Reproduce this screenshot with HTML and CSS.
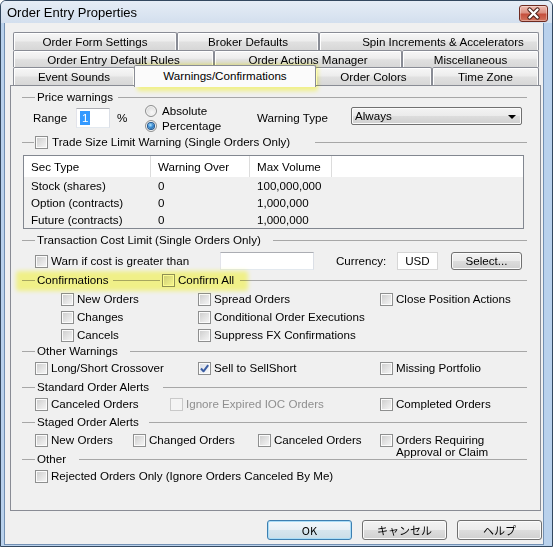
FILE: index.html
```html
<!DOCTYPE html>
<html lang="en">
<head>
<meta charset="utf-8">
<title>Order Entry Properties</title>
<link rel="stylesheet" href="styles.css">
</head>
<body>
<div class="window">
  <div class="titlebar">
    <span class="title">Order Entry Properties</span>
    <div class="close">
      <svg width="27" height="15" viewBox="0 0 27 15">
        <path d="M9.5 3.5 L17.5 11.5 M17.5 3.5 L9.5 11.5" stroke="#4a1e16" stroke-width="4.4" stroke-linecap="round" fill="none"/>
        <path d="M9.5 3.5 L17.5 11.5 M17.5 3.5 L9.5 11.5" stroke="#ffffff" stroke-width="2.4" stroke-linecap="round" fill="none"/>
      </svg>
    </div>
  </div>
  <div class="frame">
    <div class="client">
      <div class="tabs">
        <div class="tabrow r1">
          <div class="tab">Order Form Settings</div>
          <div class="tab">Broker Defaults</div>
          <div class="tab tab-spin">Spin Increments &amp; Accelerators</div>
        </div>
        <div class="tabrow r2">
          <div class="tab">Order Entry Default Rules</div>
          <div class="tab">Order Actions Manager</div>
          <div class="tab">Miscellaneous</div>
        </div>
        <div class="tabrow r3">
          <div class="tab">Event Sounds</div>
          <div class="tab sel">Warnings/Confirmations</div>
          <div class="tab">Order Colors</div>
          <div class="tab">Time Zone</div>
        </div>
      </div>

      <div class="panel">
        <div class="gh">
          <span class="lead"></span><span class="cap cap-price">Price warnings</span><span class="ln"></span>
        </div>
        <div class="price">
          <span class="p-range">Range</span>
          <span class="textbox tb-range"><span class="selected">1</span></span>
          <span class="p-pct">%</span>
          <div class="radios">
            <div class="rad"><span class="radio"></span><span>Absolute</span></div>
            <div class="rad"><span class="radio on"></span><span>Percentage</span></div>
          </div>
          <span class="p-wt">Warning Type</span>
          <div class="combo"><span class="combo-text">Always</span><span class="arrow"></span></div>
        </div>

        <div class="gh gh-trade">
          <span class="lead lead-cb"></span><span class="cb"></span><span class="cap cap-trade">Trade Size Limit Warning (Single Orders Only)</span><span class="ln"></span>
        </div>

        <div class="listview">
          <div class="lv-head">
            <span class="lv-h">Sec Type</span>
            <span class="lv-h">Warning Over</span>
            <span class="lv-h">Max Volume</span>
            <span class="lv-h lv-last"></span>
          </div>
          <div class="lv-row"><span>Stock (shares)</span><span>0</span><span>100,000,000</span><span></span></div>
          <div class="lv-row"><span>Option (contracts)</span><span>0</span><span>1,000,000</span><span></span></div>
          <div class="lv-row"><span>Future (contracts)</span><span>0</span><span>1,000,000</span><span></span></div>
        </div>

        <div class="gh gh-tx">
          <span class="lead"></span><span class="cap cap-tx">Transaction Cost Limit (Single Orders Only)</span><span class="ln"></span>
        </div>
        <div class="row row-warn">
          <label class="chk c-warn"><span class="cb"></span><span>Warn if cost is greater than</span></label>
          <span class="textbox tb-cost"></span>
          <span class="cur-label">Currency:</span>
          <span class="textbox tb-usd">USD</span>
          <span class="btn btn-select">Select...</span>
        </div>

        <div class="gh gh-conf">
          <span class="lead"></span><span class="cap cap-conf">Confirmations</span><span class="ln ln-seg"></span><span class="cb"></span><span class="cap cap-all">Confirm All</span><span class="ln"></span>
        </div>
        <div class="conf-grid">
          <label class="chk"><span class="cb"></span><span>New Orders</span></label>
          <label class="chk"><span class="cb"></span><span>Spread Orders</span></label>
          <label class="chk"><span class="cb"></span><span>Close Position Actions</span></label>
          <label class="chk"><span class="cb"></span><span>Changes</span></label>
          <label class="chk"><span class="cb"></span><span>Conditional Order Executions</span></label>
          <span></span>
          <label class="chk"><span class="cb"></span><span>Cancels</span></label>
          <label class="chk"><span class="cb"></span><span>Suppress FX Confirmations</span></label>
          <span></span>
        </div>

        <div class="gh gh-ow">
          <span class="lead"></span><span class="cap cap-ow">Other Warnings</span><span class="ln"></span>
        </div>
        <div class="row row-ow">
          <label class="chk w163"><span class="cb"></span><span>Long/Short Crossover</span></label>
          <label class="chk w182"><span class="cb checked"><svg width="11" height="11" viewBox="0 0 11 11"><path d="M2 5.5 L4.5 8.3 L9.2 2.2" stroke="#3a5da3" stroke-width="2" fill="none" stroke-linejoin="round"/></svg></span><span>Sell to SellShort</span></label>
          <label class="chk"><span class="cb"></span><span>Missing Portfolio</span></label>
        </div>

        <div class="gh gh-soa">
          <span class="lead"></span><span class="cap cap-soa">Standard Order Alerts</span><span class="ln"></span>
        </div>
        <div class="row row-soa">
          <label class="chk w135"><span class="cb"></span><span>Canceled Orders</span></label>
          <label class="chk w210 disabled"><span class="cb"></span><span>Ignore Expired IOC Orders</span></label>
          <label class="chk"><span class="cb"></span><span>Completed Orders</span></label>
        </div>

        <div class="gh gh-staged">
          <span class="lead"></span><span class="cap cap-staged">Staged Order Alerts</span><span class="ln"></span>
        </div>
        <div class="row row-staged">
          <label class="chk w98"><span class="cb"></span><span>New Orders</span></label>
          <label class="chk w125"><span class="cb"></span><span>Changed Orders</span></label>
          <label class="chk w122"><span class="cb"></span><span>Canceled Orders</span></label>
          <label class="chk two"><span class="cb"></span><span class="two-text">Orders Requiring<br>Approval or Claim</span></label>
        </div>

        <div class="gh gh-other">
          <span class="lead"></span><span class="cap cap-other">Other</span><span class="ln"></span>
        </div>
        <div class="row row-other">
          <label class="chk"><span class="cb"></span><span>Rejected Orders Only (Ignore Orders Canceled By Me)</span></label>
        </div>
      </div>

      <div class="buttons">
        <span class="btn btn-ok">OK</span>
        <span class="btn">キャンセル</span>
        <span class="btn">ヘルプ</span>
      </div>
    </div>
  </div>
  <div class="hl hl-tab"></div>
  <div class="hl hl-conf"></div>
</div>
</body>
</html>
```

FILE: styles.css
```css
* { box-sizing: border-box; }
html, body { margin: 0; padding: 0; }
body {
  font-family: "Liberation Sans", Arial, "Noto Sans CJK JP", sans-serif;
  font-size: 11.6px;
  line-height: 14px;
  color: #000;
  background: #fff;
}

.window {
  position: relative;
  width: 553px;
  height: 547px;
  border: 1px solid #34485f;
  border-radius: 6px 6px 0 0;
  background: #b9d1ec;
  display: flex;
  flex-direction: column;
  overflow: hidden;
}

.titlebar {
  height: 22px;
  flex: none;
  display: flex;
  align-items: center;
  padding-left: 6px;
  background: linear-gradient(#e6edf6, #d3dfee);
}
.title {
  flex: 1;
  font-size: 13px;
  line-height: 16px;
  padding-top: 1px;
}
.close {
  width: 29px;
  height: 17px;
  margin: 2px 4px 0 0;
  border: 1px solid #6e2a20;
  border-radius: 3px;
  background: linear-gradient(#eebbb0 0%, #dc9183 45%, #c54f3d 55%, #d2735d 100%);
  box-shadow: inset 0 0 0 1px rgba(255,255,255,0.35);
  display: flex;
  align-items: center;
  justify-content: center;
}
.close svg { display: block; }

.frame {
  flex: 1;
  display: flex;
  padding: 0 8px 1px 3px;
}
.client {
  flex: 1;
  display: flex;
  flex-direction: column;
  background: #f0f0f0;
  border: 1px solid #7390b3;
  border-top: none;
  padding-top: 9px;
}

/* Tabs */
.tabs { margin-left: 8px; width: 526px; }
.tabrow { display: grid; }
.r1 { grid-template-columns: 164px 142px 220px; height: 18px; }
.r2 { grid-template-columns: 201px 188px 137px; height: 17px; }
.r3 { grid-template-columns: 122px 180px 117px 107px; height: 18px; }
.tab {
  border: 1px solid #898c95;
  border-bottom: none;
  border-radius: 2px 2px 0 0;
  background: linear-gradient(#f7f7f7, #ededed 45%, #e0e0e0 55%, #d7d7d7);
  box-shadow: inset 1px 1px 0 #ffffff, inset -1px 0 0 #fbfbfb;
  text-align: center;
  line-height: 14px;
  padding-top: 2px;
  white-space: nowrap;
}
.tab-spin { padding-left: 28px; }
.tab.sel {
  position: relative;
  z-index: 2;
  margin: -2px -1px -2px -1px;
  background: #fbfbfb;
  box-shadow: none;
  padding-top: 3px;
}

/* Panel */
.panel {
  margin-left: 5px;
  width: 531px;
  height: 426px;
  border: 1px solid #898c95;
  background: #f0f0f0;
  padding: 4px 13px 0 11px;
}

.gh {
  display: flex;
  align-items: center;
  height: 14px;
}
.ln {
  flex: 1;
  height: 0;
  border-top: 1px solid #a7a7a7;
}
.lead {
  flex: 0 0 13px;
  height: 0;
  border-top: 1px solid #a7a7a7;
  margin-right: 2px;
}
.lead-cb { flex-basis: 12px; margin-right: 1px; }
.cap { flex: none; white-space: nowrap; }
.cap-price { width: 81px; }
.cap-trade { width: 267px; padding-left: 4px; }
.cap-tx { width: 236px; }
.cap-conf { width: 76px; }
.ln-seg { flex: 0 0 47px; margin-right: 2px; }
.cap-all { width: 65px; padding-left: 3px; }
.cap-ow { width: 93px; }
.cap-soa { width: 126px; }
.cap-staged { width: 112px; }
.cap-other { width: 42px; }

.gh-trade { margin-top: 3px; }
.gh-tx { margin-top: 4px; }
.gh-conf { margin-top: 1px; }
.gh-soa { margin-top: 3px; }
.gh-staged { margin-top: 2px; }
.gh-other { margin-top: 3px; }

/* Checkbox */
.cb {
  flex: none;
  display: inline-flex;
  align-items: center;
  justify-content: center;
  width: 13px;
  height: 13px;
  border: 1px solid #8e8f8f;
  background: linear-gradient(135deg, #cbcbcb 0%, #e4e4e4 55%, #f7f7f7 100%);
  box-shadow: inset 0 0 0 1px #fbfbfb;
}
.cb.checked {
  background: linear-gradient(135deg, #d6dbe4 0%, #eef0f4 60%, #fafafa 100%);
}
.cb svg { display: block; }
.chk {
  display: flex;
  align-items: center;
  gap: 3px;
  white-space: nowrap;
  flex: none;
}
.disabled { color: #8f8f8f; }
.disabled .cb {
  border-color: #c9c9c9;
  background: #f4f4f4;
  box-shadow: none;
}

/* Price row */
.price {
  display: flex;
  align-items: center;
  height: 28px;
  padding-left: 11px;
}
.p-range { width: 43px; }
.textbox {
  display: inline-flex;
  align-items: center;
  background: #fff;
  border: 1px solid;
  border-color: #abadb3 #dbdfe6 #e3e9ef #e2e3ea;
}
.tb-range {
  width: 34px;
  height: 20px;
  padding-left: 3px;
}
.selected {
  background: #3399ff;
  color: #fff;
  padding: 0 2px;
  line-height: 14px;
}
.p-pct { width: 28px; margin-left: 7px; }
.radios {
  width: 112px;
  display: flex;
  flex-direction: column;
}
.rad {
  height: 15px;
  display: flex;
  align-items: center;
  gap: 5px;
}
.radio {
  width: 12px;
  height: 12px;
  border-radius: 50%;
  border: 1px solid #8e8f8f;
  background: radial-gradient(circle at 60% 65%, #f8f8f8 0%, #e2e2e2 55%, #cdcdcd 100%);
  box-shadow: inset 0 0 0 1px #f6f6f6;
  display: flex;
  align-items: center;
  justify-content: center;
}
.radio.on::after {
  content: "";
  width: 6px;
  height: 6px;
  border-radius: 50%;
  background: radial-gradient(circle at 40% 35%, #b3e6ff 0%, #3c8fd6 45%, #124e8a 100%);
  box-shadow: 0 0 0 1px #1f5790;
}
.p-wt { width: 94px; }
.combo {
  align-self: flex-start;
  margin-top: 3px;
  width: 171px;
  height: 18px;
  border: 1px solid #707070;
  border-radius: 2px;
  background: linear-gradient(#f3f3f3 0%, #ebebeb 50%, #dddddd 50%, #d0d0d0 100%);
  box-shadow: inset 0 0 0 1px #fbfbfb;
  display: flex;
  align-items: center;
  padding: 0 3px 0 3px;
}
.combo-text { flex: 1; }
.arrow {
  width: 0;
  height: 0;
  border-left: 4px solid transparent;
  border-right: 4px solid transparent;
  border-top: 4px solid #000;
  margin-right: 2px;
  margin-top: 1px;
}

/* List view */
.listview {
  margin: 6px 0 0 1px;
  width: 501px;
  border: 1px solid #828790;
  background: #f0f0f0;
}
.lv-head, .lv-row {
  display: grid;
  grid-template-columns: 127px 99px 82px 1fr;
}
.lv-head {
  height: 21px;
  background: #fff;
  align-items: center;
}
.lv-h {
  height: 21px;
  display: flex;
  align-items: center;
  padding-left: 7px;
  border-right: 1px solid #dcdcdc;
}
.lv-h.lv-last { border-right: none; }
.lv-row {
  height: 17px;
  align-items: center;
}
.lv-row span { padding-left: 7px; white-space: nowrap; }

/* Rows */
.row {
  display: flex;
  align-items: center;
  height: 18px;
  padding-left: 13px;
}
.row-warn { height: 22px; margin-top: 3px; }
.c-warn { width: 185px; }
.tb-cost { width: 94px; height: 18px; }
.cur-label { width: 61px; margin-left: 22px; }
.tb-usd {
  width: 41px;
  height: 18px;
  justify-content: center;
  border-color: #d6d6d6;
}
.btn {
  display: inline-flex;
  align-items: center;
  justify-content: center;
  border: 1px solid #707070;
  border-radius: 3px;
  background: linear-gradient(#f3f3f3 0%, #ebebeb 50%, #dddddd 50%, #d0d0d0 100%);
  box-shadow: inset 0 0 0 1px #fbfbfb;
  white-space: nowrap;
}
.btn-select {
  width: 71px;
  height: 18px;
  margin-left: 13px;
}

.conf-grid {
  margin-top: 3px;
  padding-left: 39px;
  display: grid;
  grid-template-columns: 137px 182px 1fr;
  grid-auto-rows: 18px;
  align-items: center;
}

.row-ow { margin-top: 1px; }
.row-soa { margin-top: 1px; }
.row-staged { margin-top: 2px; align-items: flex-start; }
.row-staged .chk { height: 18px; }
.row-other { margin-top: 1px; }
.w163 { width: 163px; }
.w182 { width: 182px; }
.w135 { width: 135px; }
.w210 { width: 210px; }
.w98 { width: 98px; }
.w125 { width: 125px; }
.w122 { width: 122px; }
.chk.two { align-items: flex-start; }
.chk.two .cb { margin-top: 3px; }
.two-text { line-height: 12px; padding-top: 3px; }

/* Bottom buttons */
.buttons {
  display: flex;
  justify-content: flex-end;
  gap: 10px;
  margin-top: 9px;
  padding-right: 1px;
}
.buttons .btn {
  width: 85px;
  height: 20px;
  font-family: "Noto Sans CJK JP", "Liberation Sans", sans-serif;
  font-size: 11px;
}
.btn-ok {
  border-color: #3c7fb1;
  background: linear-gradient(#f1f7fb 0%, #e6eff5 50%, #d6e5ee 50%, #cadde8 100%);
  box-shadow: inset 0 0 0 1px #a9dcf7;
}

/* Yellow annotation highlights */
.hl {
  position: absolute;
  pointer-events: none;
  background: rgb(255, 255, 145);
  mix-blend-mode: multiply;
  filter: blur(2px);
  border-radius: 3px;
}
.hl-tab { left: 136px; top: 63px; width: 181px; height: 27px; }
.hl-conf { left: 15px; top: 270px; width: 232px; height: 20px; }
```
